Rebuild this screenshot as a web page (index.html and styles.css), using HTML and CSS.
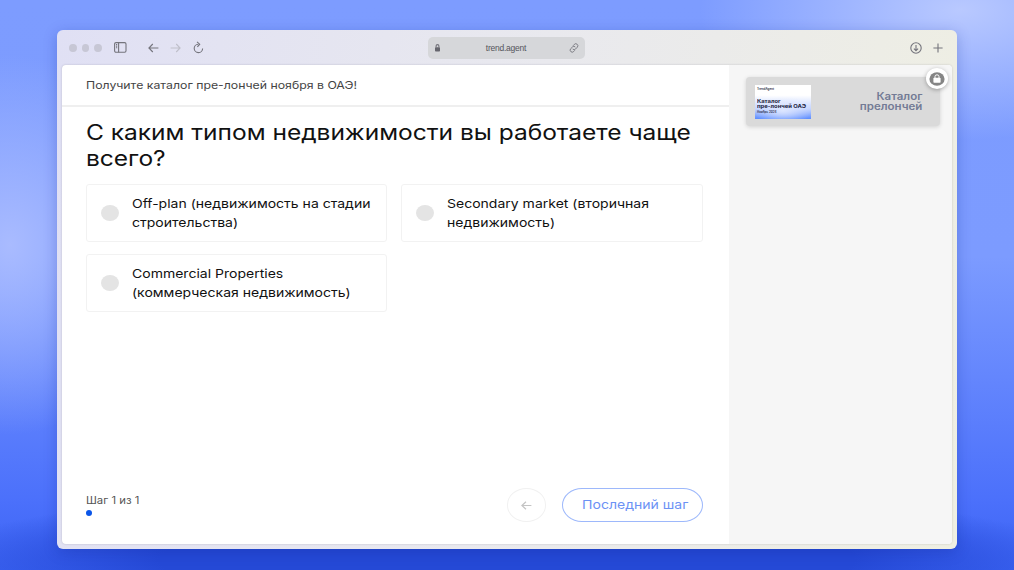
FILE: index.html
```html
<!DOCTYPE html>
<html lang="ru">
	<head>
		<meta charset="UTF-8" />
		<meta name="viewport" content="width=device-width, initial-scale=1.0" />
		<title>trend.agent</title>
		<link rel="stylesheet" href="styles.css">
	</head>

	<body>
		<div class="window">
			<div class="toolbar">
				<div class="dots"><i></i><i></i><i></i></div>
				<svg class="sidebar-icon" width="13" height="11" viewBox="0 0 13 11">
					<rect x="0.6" y="0.6" width="11.4" height="9.6" rx="1.4" />
					<path d="M4.6 0.6v9.6M2 2.6h1.2M2 4.2h1.2M2 5.8h1.2" />
				</svg>
				<svg class="back-icon" width="11" height="10" viewBox="0 0 11 10">
					<path d="M10.4 5H1M4.8 1L0.9 5l3.9 4" />
				</svg>
				<svg class="forward-icon" width="11" height="10" viewBox="0 0 11 10">
					<path d="M0.6 5H10M6.2 1l3.9 4l-3.9 4" />
				</svg>
				<svg class="reload-icon" width="11" height="13" viewBox="0 0 11 13">
					<path d="M5.2 3.2A4.2 4.2 0 1 0 9.6 7.4M4 0.8l2.7 2.4l-2.3 2.7" />
				</svg>
				<div class="address">
					<svg width="5" height="8" viewBox="0 0 5 8">
						<rect class="fill" x="0" y="3.2" width="5" height="4.3" rx="0.8" />
						<path d="M1.1 3.5V2a1.4 1.4 0 0 1 2.8 0v1.5" />
					</svg>
					<span>trend.agent</span>
					<svg class="link-icon" width="10" height="10" viewBox="0 0 10 10">
						<path d="M4.1 2.7l1.2-1.3a2 2 0 0 1 3 2.8L6.6 6a2 2 0 0 1-2.9 0M5.8 7.3L4.7 8.5a2 2 0 0 1-3-2.8L3.4 4a2 2 0 0 1 2.9 0" />
					</svg>
				</div>
				<svg class="download-icon" width="12" height="12" viewBox="0 0 12 12">
					<circle cx="6" cy="6" r="5.2" />
					<path d="M6 3v5.6M3.9 6.6L6 8.7l2.1-2.1" />
				</svg>
				<svg class="plus-icon" width="10" height="10" viewBox="0 0 10 10">
					<path d="M5 0.4v9.2M0.4 5h9.2" />
				</svg>
			</div>
			<div class="page">
				<div class="quiz">
					<div class="quiz-title"><span class="wide">Получите каталог пре-лончей ноября в ОАЭ!</span></div>
					<h1><span class="wide">С каким типом недвижимости вы работаете чаще<br>всего?</span></h1>
					<div class="options">
						<label class="option">
							<i class="radio"></i>
							<span class="wide">Off-plan (недвижимость на стадии<br>строительства)</span>
						</label>
						<label class="option">
							<i class="radio"></i>
							<span class="wide">Secondary market (вторичная<br>недвижимость)</span>
						</label>
						<label class="option">
							<i class="radio"></i>
							<span class="wide">Commercial Properties<br>(коммерческая недвижимость)</span>
						</label>
					</div>
					<div class="quiz-footer">
						<div class="step">
							<span class="wide">Шаг 1 из 1</span>
							<i></i>
						</div>
						<button class="prev">
							<svg width="11" height="9" viewBox="0 0 11 9"><path d="M10.4 4.5H1M5 0.7L0.9 4.5L5 8.3" /></svg>
						</button>
						<button class="next"><span class="wide">Последний шаг</span></button>
					</div>
				</div>
				<div class="aside">
					<div class="bonus">
						<div class="cover">
							<small>TrendAgent</small>
							<b class="wide">Каталог<br>пре-лончей ОАЭ</b>
							<small>Ноябрь 2024</small>
						</div>
						<span class="wide">Каталог<br>прелончей</span>
						<div class="lock">
							<svg width="16" height="14" viewBox="0 0 16 14">
								<ellipse cx="8" cy="7" rx="7.6" ry="6.8" fill="#858585" />
								<rect x="4.4" y="5.8" width="7.2" height="5" rx="0.8" fill="#fff" />
								<path d="M6 6V4.6a2 1.8 0 0 1 4 0V6" fill="none" stroke="#fff" />
							</svg>
						</div>
					</div>
				</div>
			</div>
		</div>
	</body>
</html>
```
FILE: styles.css
```css
* {
	box-sizing: border-box;
}
body {
	margin: 0;
	height: 570px;
	padding: 30px 57px 21px;
	overflow: hidden;
	font-family: Inter, "Liberation Sans", sans-serif;
	background:
		radial-gradient(ellipse 260px 130px at 960px 10px, #b9c9ff, transparent),
		radial-gradient(ellipse 150px 190px at 10px 245px, #a9bbff, transparent),
		radial-gradient(ellipse 580px 75px at 507px 560px, #2549d6 60%, transparent),
		linear-gradient(#7d9cff, #7c9bff 45%, #4b70fb 88%, #3c64f4);
}
/* the quiz font is drawn extended */
.wide {
	display: inline-block;
	white-space: nowrap;
	transform: scaleX(1.15);
	transform-origin: left center;
}
.window {
	height: 519px;
	padding: 0 5px 5px;
	border-radius: 6px;
	display: flex;
	flex-direction: column;
	background: linear-gradient(100deg, #e0e0f4, #e9e9ee 50%, #efefe2);
	box-shadow: 0 3px 14px rgba(10, 30, 140, 0.25);
}
.toolbar {
	height: 35px;
	display: flex;
	align-items: center;
	padding: 0 9px 0 7px;
}
.toolbar svg {
	fill: none;
	stroke: #74747c;
	stroke-width: 1.1;
}
.toolbar .fill {
	fill: #66666e;
	stroke: none;
}
.toolbar .link-icon {
	stroke-width: 0.9;
}
.dots {
	display: flex;
	gap: 5px;
	margin-right: 12px;
}
.dots i {
	width: 7.5px;
	height: 8px;
	border-radius: 50%;
	background: #c7c7d5;
}
.back-icon {
	margin-left: 21px;
}
.toolbar .forward-icon {
	margin: 0 12px 0 11px;
	stroke: #bfbfca;
}
.address {
	width: 157px;
	height: 22px;
	margin-left: 224px;
	padding: 0 5px 0 7px;
	border-radius: 5px;
	display: flex;
	align-items: center;
	justify-content: space-between;
	background: #d6d7da;
	font: 8.5px "Liberation Sans", Arial, sans-serif;
	letter-spacing: -0.25px;
	color: #55555c;
}
.address span {
	padding-left: 3px;
}
.download-icon {
	margin: 0 11px 0 auto;
}
.page {
	flex: 1;
	display: flex;
	border-radius: 4px;
	overflow: hidden;
	background: #fff;
	box-shadow: 0 0 2px rgba(60, 60, 80, 0.25);
}
.quiz {
	width: 667px;
	display: flex;
	flex-direction: column;
}
.quiz-title {
	height: 42px;
	padding: 1px 24px 0;
	display: flex;
	align-items: center;
	border-bottom: 2px solid #efefef;
	font-size: 10.7px;
	color: #444;
}
h1 {
	margin: 12px 24px 0;
	font-size: 21.3px;
	line-height: 26px;
	font-weight: 400;
	color: #111;
}
h1 .wide {
	display: block;
}
.options {
	margin: 13px 26px 0 24px;
	display: grid;
	grid-template-columns: 301px 302px;
	gap: 12px 14px;
}
.option {
	height: 58px;
	padding-left: 14px;
	display: flex;
	align-items: center;
	border: 1px solid #f2f2f2;
	border-radius: 3px;
	font-size: 12.2px;
	line-height: 19px;
	color: #111;
}
.radio {
	width: 18px;
	height: 16px;
	margin-right: 13px;
	border-radius: 50%;
	background: #e4e4e4;
}
.quiz-footer {
	margin: auto 26px 22px 24px;
	display: flex;
	align-items: center;
}
.step {
	margin-right: auto;
	font-size: 9.9px;
	line-height: 12px;
	color: #555;
}
.step i {
	display: block;
	width: 6px;
	height: 6px;
	margin-top: 4px;
	border-radius: 50%;
	background: #0a55e8;
}
button {
	padding: 0;
	background: none;
	font-family: inherit;
}
.prev {
	width: 39px;
	height: 34px;
	margin-right: 16px;
	border: 1px solid #f1f1f1;
	border-radius: 20px / 17px;
}
.prev svg {
	display: block;
	margin: auto;
	fill: none;
	stroke: #c4c4c4;
	stroke-width: 1.2;
}
.next {
	width: 141px;
	height: 34px;
	padding: 0 0 1px 5px;
	border: 1px solid #9db8fb;
	border-radius: 20px / 17px;
	font-size: 12.2px;
	color: #6c92f5;
}
.next .wide {
	transform-origin: center;
}
.aside {
	flex: 1;
	padding: 12px 12px 0 17px;
	background: #f6f6f6;
}
.bonus {
	position: relative;
	height: 49px;
	padding: 0 18px 0 9px;
	display: flex;
	align-items: center;
	justify-content: space-between;
	border-radius: 4px;
	background: #dadada;
	box-shadow: 0 1px 4px rgba(0, 0, 0, 0.15);
	font-size: 10px;
	line-height: 10px;
	font-weight: 600;
	text-align: right;
	color: #737b95;
}
.bonus > .wide {
	padding-bottom: 1px;
	transform-origin: right center;
}
.cover {
	width: 56px;
	height: 34px;
	padding: 2px;
	display: flex;
	flex-direction: column;
	align-items: flex-start;
	text-align: left;
	color: #1c2340;
	background:
		radial-gradient(ellipse 30px 14px at 50% 75%, rgba(225, 233, 255, 0.9), transparent),
		linear-gradient(#fff 30%, #c4d4ff 70%, #5c8cff);
}
.cover small {
	font-size: 3px;
	line-height: 4px;
}
.cover b {
	margin-top: 8px;
	font-size: 5.1px;
	line-height: 5.5px;
	font-weight: 700;
}
.lock {
	position: absolute;
	top: -9px;
	right: -8px;
	width: 22px;
	height: 21px;
	display: flex;
	align-items: center;
	justify-content: center;
	border-radius: 50%;
	background: #fff;
	box-shadow: 0 1px 4px rgba(0, 0, 0, 0.3);
}
```
